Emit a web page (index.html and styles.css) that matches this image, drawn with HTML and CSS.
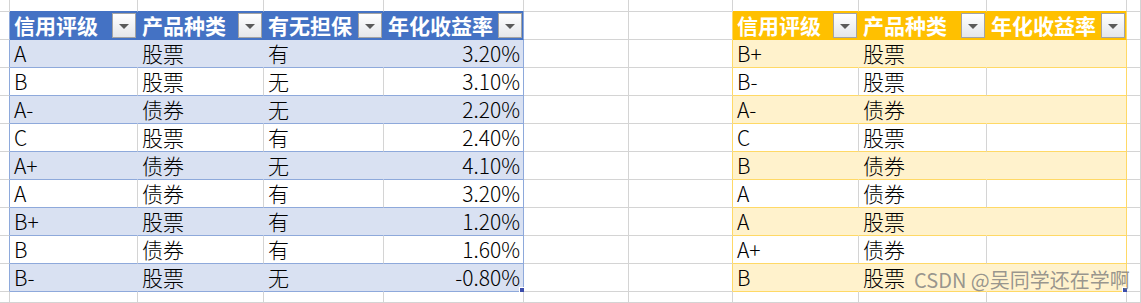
FILE: index.html
```html
<!DOCTYPE html>
<html lang="zh">
<head>
<meta charset="utf-8">
<title>表格</title>
<link rel="stylesheet" href="styles.css">
</head>
<body>
<div class="sheet">
  <div class="row top">
    <div class="c"></div><div class="c tb-l"></div><div class="c tb-l"></div><div class="c tb-l"></div><div class="c tb-l"></div><div class="c"></div><div class="c"></div><div class="c tb-r"></div><div class="c tb-r"></div><div class="c tb-r"></div><div class="c"></div>
  </div>
  <div class="row">
    <div class="c edge-l"></div>
    <div class="c hl"><span>信用评级</span><i class="dd"></i></div>
    <div class="c hl"><span>产品种类</span><i class="dd"></i></div>
    <div class="c hl"><span>有无担保</span><i class="dd"></i></div>
    <div class="c hl"><span>年化收益率</span><i class="dd"></i></div>
    <div class="c"></div>
    <div class="c edge-r"></div>
    <div class="c hr"><span>信用评级</span><i class="dd"></i></div>
    <div class="c hr"><span>产品种类</span><i class="dd"></i></div>
    <div class="c hr"><span>年化收益率</span><i class="dd"></i></div>
    <div class="c"></div>
  </div>

  <div class="row band">
    <div class="c edge-l"></div>
    <div class="c l">A</div><div class="c l">股票</div><div class="c l">有</div><div class="c l num last">3.20%</div>
    <div class="c"></div><div class="c edge-r"></div>
    <div class="c r">B+</div><div class="c r">股票</div><div class="c r last"></div>
    <div class="c"></div>
  </div>
  <div class="row">
    <div class="c edge-l"></div>
    <div class="c l">B</div><div class="c l">股票</div><div class="c l">无</div><div class="c l num last">3.10%</div>
    <div class="c"></div><div class="c edge-r"></div>
    <div class="c r">B-</div><div class="c r">股票</div><div class="c r last"></div>
    <div class="c"></div>
  </div>
  <div class="row band">
    <div class="c edge-l"></div>
    <div class="c l">A-</div><div class="c l">债券</div><div class="c l">无</div><div class="c l num last">2.20%</div>
    <div class="c"></div><div class="c edge-r"></div>
    <div class="c r">A-</div><div class="c r">债券</div><div class="c r last"></div>
    <div class="c"></div>
  </div>
  <div class="row">
    <div class="c edge-l"></div>
    <div class="c l">C</div><div class="c l">股票</div><div class="c l">有</div><div class="c l num last">2.40%</div>
    <div class="c"></div><div class="c edge-r"></div>
    <div class="c r">C</div><div class="c r">股票</div><div class="c r last"></div>
    <div class="c"></div>
  </div>
  <div class="row band">
    <div class="c edge-l"></div>
    <div class="c l">A+</div><div class="c l">债券</div><div class="c l">无</div><div class="c l num last">4.10%</div>
    <div class="c"></div><div class="c edge-r"></div>
    <div class="c r">B</div><div class="c r">债券</div><div class="c r last"></div>
    <div class="c"></div>
  </div>
  <div class="row">
    <div class="c edge-l"></div>
    <div class="c l">A</div><div class="c l">债券</div><div class="c l">有</div><div class="c l num last">3.20%</div>
    <div class="c"></div><div class="c edge-r"></div>
    <div class="c r">A</div><div class="c r">债券</div><div class="c r last"></div>
    <div class="c"></div>
  </div>
  <div class="row band">
    <div class="c edge-l"></div>
    <div class="c l">B+</div><div class="c l">股票</div><div class="c l">有</div><div class="c l num last">1.20%</div>
    <div class="c"></div><div class="c edge-r"></div>
    <div class="c r">A</div><div class="c r">股票</div><div class="c r last"></div>
    <div class="c"></div>
  </div>
  <div class="row">
    <div class="c edge-l"></div>
    <div class="c l">B</div><div class="c l">债券</div><div class="c l">有</div><div class="c l num last">1.60%</div>
    <div class="c"></div><div class="c edge-r"></div>
    <div class="c r">A+</div><div class="c r">债券</div><div class="c r last"></div>
    <div class="c"></div>
  </div>
  <div class="row band">
    <div class="c edge-l"></div>
    <div class="c l">B-</div><div class="c l">股票</div><div class="c l">无</div><div class="c l num last">-0.80%<b class="handle"></b></div>
    <div class="c"></div><div class="c edge-r"></div>
    <div class="c r">B</div><div class="c r">股票</div><div class="c r last"><b class="handle"></b></div>
    <div class="c"></div>
  </div>

  <div class="row bottom">
    <div class="c"></div><div class="c"></div><div class="c"></div><div class="c"></div><div class="c"></div><div class="c"></div><div class="c"></div><div class="c"></div><div class="c"></div><div class="c"></div><div class="c"></div>
  </div>

  <div class="watermark">CSDN @吴同学还在学啊</div>
</div>
</body>
</html>
```

FILE: styles.css
```css
* { box-sizing: border-box; }

html, body {
  margin: 0;
  padding: 0;
  background: #ffffff;
}

body {
  font-family: "Noto Sans CJK SC", "Noto Sans", sans-serif;
  font-size: 21px;
  font-weight: 300;
  color: #000;
  overflow: hidden;
}

.sheet {
  position: relative;
  width: 1141px;
  height: 303px;
  display: flex;
  flex-direction: column;
}

.row {
  display: grid;
  grid-template-columns: 10px 128px 126px 120px 140px 105px 104px 126px 128px 140px 1fr;
  height: 28px;
  flex: none;
}

.row.top { height: 12px; }
.row.bottom { flex: 1; }

.c {
  position: relative;
  border-right: 1px solid #d4d4d4;
  border-bottom: 1px solid #d4d4d4;
  display: flex;
  align-items: center;
  padding-left: 4px;
  white-space: nowrap;
  line-height: 27px;
}

.top .c.tb-l { border-bottom-color: #4472c4; }
.top .c.tb-r { border-bottom-color: #ffc000; }

/* outer edges of tables */
.c.edge-l { border-right-color: #8ea9db; }
.c.edge-r { border-right-color: #ffd966; }

/* headers */
.c.hl, .c.hr {
  color: #ffffff;
  font-weight: bold;
  justify-content: space-between;
  padding-right: 1px;
}
.c.hl { background: #4472c4; border-color: #4472c4; }
.c.hr { background: #ffc000; border-color: #ffc000; }

.dd {
  width: 24px;
  height: 25px;
  border: 1px solid #a3a3a3;
  background: linear-gradient(#ffffff, #e4e6ea);
  display: flex;
  align-items: center;
  justify-content: center;
  flex: none;
}
.dd::after {
  content: "";
  width: 0;
  height: 0;
  margin-top: 1px;
  border-left: 5px solid transparent;
  border-right: 5px solid transparent;
  border-top: 5px solid #5a5a5a;
}

/* data cells */
.c.l { border-bottom-color: #8ea9db; }
.c.r { border-bottom-color: #ffd966; }
.band .c.l { background: #d9e1f2; border-right-color: #d9e1f2; }
.band .c.r { background: #fff2cc; border-right-color: #fff2cc; }
.c.l.last { border-right-color: #8ea9db; }
.c.r.last { border-right-color: #ffd966; }
.hl:nth-child(5) { border-right-color: #8ea9db; }
.hr:nth-child(10) { border-right-color: #ffd966; }

.c.num {
  justify-content: flex-end;
  padding-right: 3px;
}

.handle {
  position: absolute;
  right: -2px;
  bottom: -2px;
  width: 6px;
  height: 6px;
  background: #3b4dab;
  border: 1px solid #ffffff;
}

.watermark {
  position: absolute;
  left: 914px;
  top: 266px;
  font-size: 20px;
  font-weight: 400;
  line-height: 28px;
  color: rgba(125, 125, 125, 0.8);
  white-space: nowrap;
}
```
